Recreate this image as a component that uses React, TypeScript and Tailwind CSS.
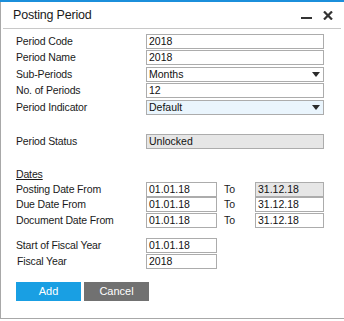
import React from 'react';

const font = { fontFamily: '"Liberation Sans", Arial, sans-serif' };

function Box({
  value,
  select,
  tone = 'white',
  className = '',
}: {
  value: string;
  select?: boolean;
  tone?: 'white' | 'gray' | 'blue';
  className?: string;
}) {
  const bg = tone === 'gray' ? 'bg-[#e6e6e6]' : tone === 'blue' ? 'bg-[#eaf5fd]' : 'bg-white';
  return (
    <div
      className={`relative flex h-[15px] items-center border border-[#acacac] pl-[2px] text-[10.5px] leading-none text-[#111] ${bg} ${className}`}
    >
      {value}
      {select && (
        <svg className="absolute right-[3px] top-[4px]" width="8" height="5" viewBox="0 0 8 5">
          <path d="M0 0 H8 L4 5 Z" fill="#2b2b2b" />
        </svg>
      )}
    </div>
  );
}

function Row({ label, children, className = '', labelClass = '' }: { label: string; children: React.ReactNode; className?: string; labelClass?: string }) {
  return (
    <div className={`grid grid-cols-[130px_71px_38px_69px] items-center ${className}`}>
      <span className={`text-[10.5px] leading-none tracking-[-0.15px] text-[#1a1a1a] ${labelClass}`}>{label}</span>
      {children}
    </div>
  );
}

function DateRow({ label, from, to, toGray, className = '' }: { label: string; from: string; to: string; toGray?: boolean; className?: string }) {
  return (
    <Row label={label} className={className}>
      <Box value={from} />
      <span className="pl-[7px] text-[10.5px] leading-none text-[#1a1a1a]">To</span>
      <Box value={to} tone={toGray ? 'gray' : 'white'} />
    </Row>
  );
}

export default function App() {
  return (
    <div className="h-[321px] w-[344px] overflow-hidden bg-white" style={font}>
      <div className="h-[2px] bg-[#1b8fdb]" />
      <div className="flex h-[317px] flex-col border-b border-l border-[#a8a8a8]">
        {/* Title bar */}
        <div className="flex h-[26px] items-center pl-[12px] pr-[11px]">
          <span className="text-[12.5px] tracking-[-0.2px] text-[#1a1a1a]">Posting Period</span>
          <div className="ml-auto flex items-center gap-[11px]">
            <div className="mt-[6px] h-[2px] w-[11px] bg-[#333]" />
            <svg width="10" height="9" viewBox="0 0 10 9">
              <path d="M1 0.5 L9 8.5 M9 0.5 L1 8.5" stroke="#333" strokeWidth="2.2" />
            </svg>
          </div>
        </div>
        <div className="ml-[2px] mr-[3px] h-px bg-[#c8c8c8]" />

        {/* Form */}
        <div className="flex flex-col pl-[15px]">
          <Row label="Period Code" className="mt-[5px]">
            <Box value="2018" className="col-span-3" />
          </Row>
          <Row label="Period Name" className="mt-[1px]">
            <Box value="2018" className="col-span-3" />
          </Row>
          <Row label="Sub-Periods" className="mt-[2px]">
            <Box value="Months" select className="col-span-3" />
          </Row>
          <Row label="No. of Periods" className="mt-[1px]">
            <Box value="12" className="col-span-3" />
          </Row>
          <Row label="Period Indicator" className="mt-[2px]">
            <Box value="Default" select tone="blue" className="col-span-3" />
          </Row>

          <Row label="Period Status" className="mt-[19px]">
            <Box value="Unlocked" tone="gray" className="col-span-3" />
          </Row>

          <span className="mt-[20px] text-[10.5px] leading-none tracking-[-0.15px] text-[#1a1a1a] underline">Dates</span>
          <DateRow label="Posting Date From" from="01.01.18" to="31.12.18" toGray className="mt-[2px]" />
          <DateRow label="Due Date From" from="01.01.18" to="31.12.18" />
          <DateRow label="Document Date From" from="01.01.18" to="31.12.18" className="mt-[1px]" />

          <Row label="Start of Fiscal Year" className="mt-[10px]">
            <Box value="01.01.18" />
          </Row>
          <Row label="Fiscal Year" className="mt-[1px]" labelClass="pl-[1px]">
            <span className="col-start-2">
              <Box value="2018" />
            </span>
          </Row>

          <div className="mt-[13px] flex gap-[3px]">
            <button className="h-[19px] w-[65px] bg-[#199fe3] text-[11px] text-white">Add</button>
            <button className="h-[19px] w-[65px] bg-[#717171] text-[11px] text-white">Cancel</button>
          </div>
        </div>
      </div>
    </div>
  );
}
